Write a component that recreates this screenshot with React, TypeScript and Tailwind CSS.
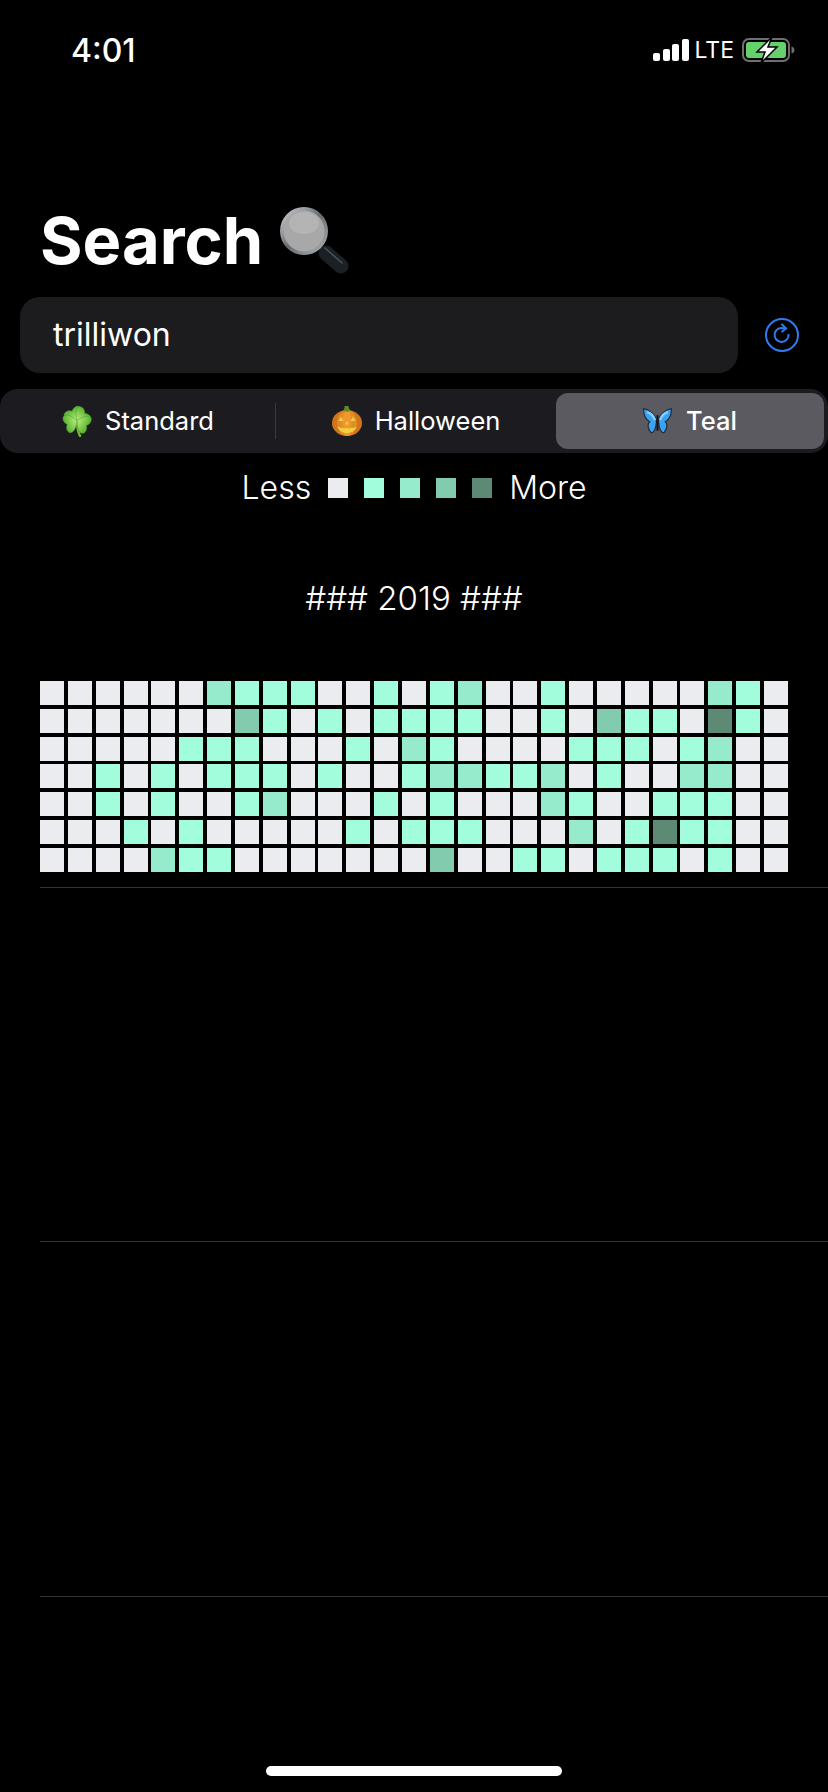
import type { ReactNode } from "react";

const levels = ["bg-[#ebecf0]", "bg-[#a1fddb]", "bg-[#95ebcb]", "bg-[#82cbae]", "bg-[#5c8a75]"];

const rows = [
  "000000211100101" + "200100000210",
  "000000031010111" + "100103110410",
  "000001110001021" + "000011101200",
  "001010111010012" + "211201002200",
  "001010012000101" + "000210011100",
  "000101000001011" + "100020141100",
  "000021100000003" + "001101110100",
];

const leaf = "M0 0C-3-2-10-5-9.500-10.500-9-14-3-14.500 0-11 3-14.500 9-14 9.500-10.500 10-5 3-2 0 0z";

function Clover() {
  return (
    <svg width="30" height="32" viewBox="0 0 30 32">
      <defs>
        <radialGradient id="leafFill" cx="0.5" cy="0.9" r="0.9">
          <stop offset="0" stopColor="#b4e878" />
          <stop offset="1" stopColor="#5ab632" />
        </radialGradient>
      </defs>
      <path d="M15 16c0 6 1 11 3 15" stroke="#6fb53a" strokeWidth="2.500" fill="none" strokeLinecap="round" />
      <path d={leaf} fill="url(#leafFill)" stroke="#4f9f2b" strokeWidth="0.500" transform="translate(15 15.500) rotate(-28) scale(0.95)" />
      <path d={leaf} fill="url(#leafFill)" stroke="#4f9f2b" strokeWidth="0.500" transform="translate(15 15.500) rotate(48) scale(0.95)" />
      <path d={leaf} fill="url(#leafFill)" stroke="#4f9f2b" strokeWidth="0.500" transform="translate(15 15.500) rotate(118) scale(0.95)" />
      <path d={leaf} fill="url(#leafFill)" stroke="#4f9f2b" strokeWidth="0.500" transform="translate(15 15.500) rotate(-112) scale(0.95)" />
    </svg>
  );
}

function Pumpkin() {
  return (
    <svg width="30" height="30" viewBox="0 0 30 30">
      <ellipse cx="15" cy="17" rx="15" ry="13" fill="#d0751d" />
      <ellipse cx="15" cy="17" rx="10" ry="13" fill="#e48a26" />
      <ellipse cx="15" cy="17" rx="4.500" ry="13" fill="#ee982e" />
      <path d="M11 4.500c1-1 2-2 1.500-4.500h4c0 2 1 3.500 2.500 4.500-2 1.500-6 1.500-8 0z" fill="#5f8a26" />
      <g fill="#f0d040">
        <path d="M9 10.500l2.500 4.500h-5z" />
        <path d="M21 10.500l2.500 4.500h-5z" />
        <path d="M15 15l2 3.500h-4z" />
        <path d="M5.500 20.500c3 1.500 4 1 5 1.500 1 .5 1 1 2 .5 2-1 3-.5 4 0s2-.5 3-.5 3 0 5-1.500c-1 4-4.500 6.500-9.500 6.500s-8.500-2.500-9.500-6.500z" />
      </g>
    </svg>
  );
}

function Butterfly() {
  return (
    <svg width="29" height="26" viewBox="0 0 29 26">
      <path d="M13.500 13C13 7 6 1.500 .7 .7c-.5 5 1.500 11 6 13-2.500 2-2 7 1 10.500 3 2 5.500-4 5.800-11.200z" fill="#3aa2f2" stroke="#232b33" strokeWidth="1.200" />
      <path d="M15.500 13C16 7 23 1.500 28.300 .7c.5 5-1.500 11-6 13 2.500 2 2 7-1 10.500-3 2-5.500-4-5.800-11.200z" fill="#3aa2f2" stroke="#232b33" strokeWidth="1.200" />
      <path d="M4 4c4 1 6.500 4 8 8M25 4c-4 1-6.500 4-8 8" stroke="#86ccfb" strokeWidth="2.500" fill="none" />
      <path d="M14.500 8v14" stroke="#12171c" strokeWidth="2" strokeLinecap="round" />
    </svg>
  );
}

function Magnifier() {
  return (
    <svg width="70" height="70" viewBox="0 0 70 70">
      <defs>
        <linearGradient id="rim" x1="0" y1="0" x2="1" y2="1">
          <stop offset="0" stopColor="#d8dadc" />
          <stop offset="0.5" stopColor="#666b70" />
          <stop offset="1" stopColor="#b5b9bc" />
        </linearGradient>
      </defs>
      <path d="M47 47l15 13" stroke="#1b2024" strokeWidth="15" strokeLinecap="round" />
      <path d="M46 42l17 15" stroke="#4c5458" strokeWidth="1.500" strokeLinecap="round" />
      <circle cx="25" cy="25" r="24" fill="url(#rim)" />
      <circle cx="25" cy="25" r="20.500" fill="#a8a8a8" />
      <ellipse cx="25" cy="17" rx="15" ry="11" fill="#b4b4b4" />
    </svg>
  );
}

function StatusBar() {
  return (
    <div className="flex h-[100px] items-start justify-between pl-[71px] pr-[32px] pt-[31px]">
      <span className="text-[32px] font-medium leading-[40px] text-white">4:01</span>
      <div className="flex items-center gap-[6px] pt-[5px]">
        <div className="flex items-end gap-[2.500px]">
          <div className="h-[8px] w-[7px] rounded-[2px] bg-white" />
          <div className="h-[12px] w-[7px] rounded-[2px] bg-white" />
          <div className="h-[17px] w-[7px] rounded-[2px] bg-white" />
          <div className="h-[22px] w-[7px] rounded-[2px] bg-white" />
        </div>
        <span className="text-[23px] leading-[26px] text-white">LTE</span>
        <svg width="54" height="28" viewBox="0 0 54 28" className="ml-[2px]">
          <rect x="1" y="3" width="46" height="22" rx="6" fill="none" stroke="#6f6f6f" strokeWidth="2" />
          <rect x="4" y="6" width="40" height="16" rx="3" fill="#65d16a" />
          <path d="M49.500 10.500c2 .5 3 2 3 3.500s-1 3-3 3.500z" fill="#6f6f6f" />
          <path d="M30 1L15 16h8l-4 11 16-16h-9z" fill="#fff" stroke="#000" strokeWidth="1.500" />
        </svg>
      </div>
    </div>
  );
}

function Segment({ icon, label, active }: { icon: ReactNode; label: string; active?: boolean }) {
  return (
    <div
      className={
        active
          ? "flex h-[56px] flex-1 items-center justify-center gap-[14px] rounded-[12px] bg-[#5b5a60] font-medium"
          : "flex h-[56px] flex-1 items-center justify-center gap-[13px]"
      }
    >
      {icon}
      <span>{label}</span>
    </div>
  );
}

function App() {
  return (
    <div className="flex h-[1792px] w-[828px] flex-col overflow-hidden bg-black font-['Inter',sans-serif] text-white">
      <StatusBar />

      <div className="flex items-start gap-[16px] pl-[40px] pt-[106px]">
        <h1 className="text-[65px] font-bold leading-[70px]">Search</h1>
        <Magnifier />
      </div>

      <div className="mt-[21px] flex items-center pl-[20px]">
        <div className="flex h-[76px] w-[718px] items-center rounded-[20px] bg-[#1c1c1e] pl-[33px] text-[32px]">
          trilliwon
        </div>
        <svg width="36" height="36" viewBox="0 0 36 36" className="ml-[26px]">
          <circle cx="18" cy="18" r="16" fill="none" stroke="#2f7bf0" strokeWidth="2" />
          <path d="M24.500 17a7 7 0 1 1-4-5.400" fill="none" stroke="#2f7bf0" strokeWidth="2" />
          <path d="M17.500 7l4.500 4.500-4.500 3.500" fill="none" stroke="#2f7bf0" strokeWidth="2" />
        </svg>
      </div>

      <div className="mt-[16px] flex h-[64px] w-[828px] items-center rounded-[18px] bg-[#1c1c20] pl-[1px] pr-[4px] text-[25.500px]">
        <div className="w-[274px] shrink-0">
          <Segment icon={<Clover />} label="Standard" />
        </div>
        <div className="h-[36px] w-[1px] bg-[#3a3a3c]" />
        <Segment icon={<Pumpkin />} label="Halloween" />
        <div className="w-[268px] shrink-0">
          <Segment icon={<Butterfly />} label="Teal" active />
        </div>
      </div>

      <div className="mt-[14px] flex h-[42px] items-center justify-center gap-[16px] text-[32px] font-light">
        <span className="mr-[1px]">Less</span>
        {levels.map((color) => (
          <div key={color} className={`h-[20px] w-[20px] ${color}`} />
        ))}
        <span className="ml-[1px]">More</span>
      </div>

      <div className="mt-[69px] text-center text-[33px] font-light leading-[40px]">### 2019 ###</div>

      <div className="ml-[40px] mt-[63px] grid h-[191px] w-[748px] grid-cols-[repeat(27,24px)] grid-rows-[repeat(7,24px)] content-between justify-between">
        {rows.map((row, r) =>
          row.split("").map((level, c) => <div key={`${r}-${c}`} className={levels[Number(level)]} />),
        )}
      </div>

      <div className="ml-[40px] mt-[15px] h-[1px] bg-[#333335]" />
      <div className="ml-[40px] mt-[353px] h-[1px] bg-[#333335]" />
      <div className="ml-[40px] mt-[354px] h-[1px] bg-[#333335]" />

      <div className="mx-auto mt-[169px] h-[10px] w-[296px] rounded-full bg-white" />
    </div>
  );
}

export default App;
